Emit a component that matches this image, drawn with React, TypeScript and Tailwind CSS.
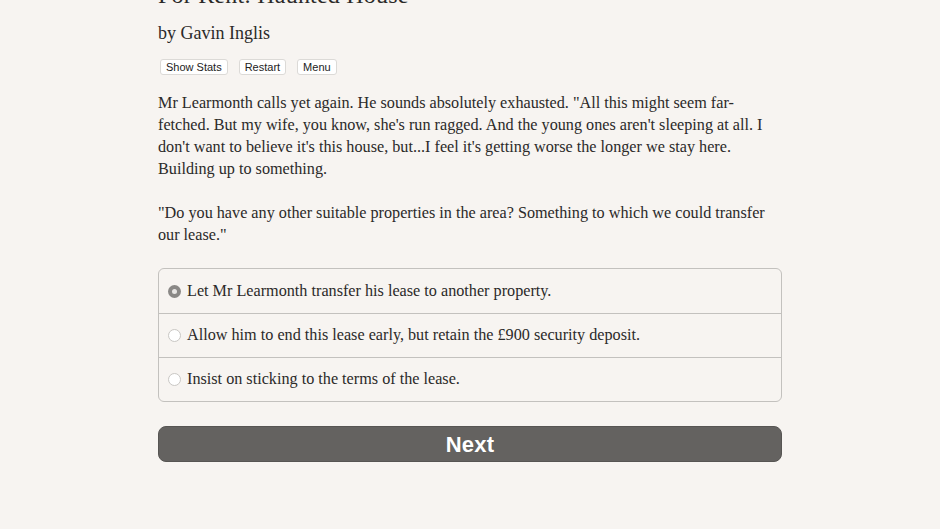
const choices = [
  'Let Mr Learmonth transfer his lease to another property.',
  'Allow him to end this lease early, but retain the £900 security deposit.',
  'Insist on sticking to the terms of the lease.',
]

function Radio({ checked }: { checked: boolean }) {
  return checked ? (
    <span className="w-[13px] h-[13px] rounded-full bg-[#8a8886] flex items-center justify-center shrink-0">
      <span className="w-[5px] h-[5px] rounded-full bg-[#e8e6e4]" />
    </span>
  ) : (
    <span className="w-[13px] h-[13px] rounded-full border border-[#c9c7c4] bg-white shrink-0" />
  )
}

export default function App() {
  return (
    <div className="min-h-[529px] bg-[#f7f4f1] text-[#2b2a29] overflow-hidden">
      <div className="w-[624px] ml-[158px] font-['Liberation_Serif',serif]">
        <h1 className="text-[24px] leading-[32px] mt-[-21px] tracking-[0.2px]">For Rent: Haunted House</h1>
        <h2 className="text-[18px] leading-[24px] mt-[10px]">by Gavin Inglis</h2>

        <div className="flex gap-[11px] mt-[14px] ml-[2px] font-['Liberation_Sans',sans-serif]">
          {['Show Stats', 'Restart', 'Menu'].map((b) => (
            <button
              key={b}
              className="h-[16px] px-[5px] text-[11px] leading-[14px] bg-white border border-[#dcdad7] rounded-[3px] text-[#222]"
            >
              {b}
            </button>
          ))}
        </div>

        <div className="mt-[17px] text-[16.2px] leading-[22px]">
          <p>
            Mr Learmonth calls yet again. He sounds absolutely exhausted. "All this might seem far-
            <br />
            fetched. But my wife, you know, she's run ragged. And the young ones aren't sleeping at all. I
            <br />
            don't want to believe it's this house, but...I feel it's getting worse the longer we stay here.
            <br />
            Building up to something.
          </p>
          <p className="mt-[22px]">
            "Do you have any other suitable properties in the area? Something to which we could transfer
            <br />
            our lease."
          </p>
        </div>

        <div className="mt-[22px] border border-[#c3c1be] rounded-[6px] flex flex-col">
          {choices.map((c, i) => (
            <label
              key={c}
              className={`h-[44px] flex items-center gap-[6px] pl-[9px] text-[16.2px] ${i > 0 ? 'border-t border-[#c3c1be]' : ''}`}
            >
              <Radio checked={i === 0} />
              <span>{c}</span>
            </label>
          ))}
        </div>

        <button className="mt-[24px] w-full h-[36px] rounded-[8px] bg-[#646260] border border-[#575553] text-white font-bold text-[22px] font-['Liberation_Sans',sans-serif] tracking-[0.2px]">
          Next
        </button>
      </div>
    </div>
  )
}
